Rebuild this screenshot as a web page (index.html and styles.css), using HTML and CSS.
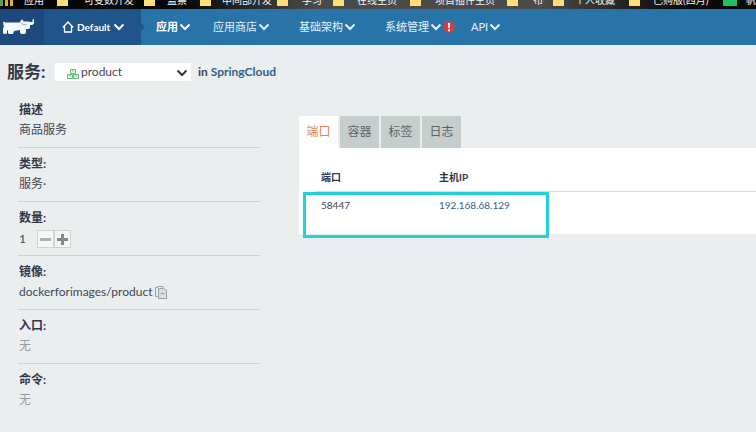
FILE: index.html
```html
<!DOCTYPE html>
<html lang="zh-CN">
<head>
<meta charset="utf-8">
<title>product - SpringCloud</title>
<link rel="stylesheet" href="styles.css">
</head>
<body>
<svg class="defs" aria-hidden="true">
  <symbol id="chevron" viewBox="0 0 12 8"><path d="M1.500 1.500 6 6l4.500-4.500" fill="none" stroke="currentColor" stroke-width="2"/></symbol>
</svg>
<div class="bookmarks">
  <span class="apps"><i></i><i></i><i></i></span>
  <span>应用</span>
  <i class="folder"></i><span>可变数开发</span>
  <i class="folder"></i><span>监察</span>
  <i class="folder"></i><span>中间部开发</span>
  <i class="folder"></i><span>学习</span>
  <i class="folder"></i><span>在线主页</span>
  <i class="folder"></i><span>项目插件主页</span>
  <i class="folder"></i><span>布</span>
  <i class="folder"></i><span>个人收藏</span>
  <i class="folder"></i><span>已购版(四月)</span>
  <i class="folder green"></i><span>帆</span>
</div>
<header class="header">
  <a class="brand" href="#" aria-label="Rancher">
    <svg width="32" height="16" viewBox="0 0 32 16" fill="#f3f9fc"><path d="M0 3.500 1 2.500l1 1h15L18 1l1.500-.5 1 2H25l3 .5h1.500V.500L31 0v4.500L29.500 6H27v3l-1.500 1H23v4l-1 1h-3.500L17 14v-3l-6 1-1 3H6l-1-1v-3l-1 1v2L3 15H1l-1-1V9l1-1z"/><path d="M18.500 4c1 2 3.500 2 5.500 1" fill="none" stroke="#8fb0cc"/></svg>
  </a>
  <a class="env" href="#">
    <svg width="12" height="12" viewBox="0 0 12 12" fill="none" stroke="currentColor" stroke-width="1.300"><path d="M.8 6.500 6 1l5.200 5.500M2.500 5.500V11h7V5.500"/></svg>
    Default<svg class="chev" width="12" height="8"><use href="#chevron"/></svg>
  </a>
  <nav class="nav">
    <a class="on" href="#">应用<svg class="chev" width="12" height="8"><use href="#chevron"/></svg></a>
    <a href="#">应用商店<svg class="chev" width="12" height="8"><use href="#chevron"/></svg></a>
    <a href="#">基础架构<svg class="chev" width="12" height="8"><use href="#chevron"/></svg></a>
    <a href="#">系统管理<svg class="chev" width="12" height="8"><use href="#chevron"/></svg><svg class="alert" width="12" height="12" viewBox="0 0 12 12"><circle cx="6" cy="6" r="5.700" fill="#d93a40"/><path d="M6 2v5M6 8.300v1.900" stroke="#fff" stroke-width="1.900"/></svg></a>
    <a href="#">API<svg class="chev" width="12" height="8"><use href="#chevron"/></svg></a>
  </nav>
</header>
<section class="title">
  <h1><label for="service">服务:</label></h1>
  <div class="picker">
    <select id="service"><option>product</option></select>
    <svg class="stack" width="12" height="10" viewBox="0 0 12 10" fill="#e2f3e4" stroke="#6cba78"><path d="M3.500.5h5v4h-5zM.5 5.500h5v4h-5zM6.500 5.500h5v4h-5zM6 .5v2M3 5.500v2M9 5.500v2"/></svg>
    <svg class="arrow" width="12" height="8"><use href="#chevron"/></svg>
  </div>
  <p>in <a href="#">SpringCloud</a></p>
</section>
<main class="main">
  <aside class="facts">
    <section><h2>描述</h2><p>商品服务</p></section>
    <section><h2>类型:</h2><p>服务·</p></section>
    <section><h2>数量:</h2>
      <div class="scale"><span>1</span><div class="buttons">
        <button type="button" aria-label="减少"><svg width="11" height="11" viewBox="0 0 11 11"><path d="M0 5.500h11" stroke="#adb1b3" stroke-width="3"/></svg></button><button type="button" aria-label="增加"><svg width="11" height="11" viewBox="0 0 11 11"><path d="M0 5.500h11M5.500 0v11" stroke="#85898c" stroke-width="3"/></svg></button>
      </div></div>
    </section>
    <section><h2>镜像:</h2><p class="image">dockerforimages/product
      <svg width="12" height="13" viewBox="0 0 12 13" fill="none" stroke="#999fa2"><path d="M3 10.500H.5v-9H3M2.500.500h5.500v2"/><path d="M3.500 2.500h5l3 2v8h-8z" fill="#dcdfe0"/><path d="M5.500 7.500h4"/></svg></p></section>
    <section><h2>入口:</h2><p class="none">无</p></section>
    <section><h2>命令:</h2><p class="none">无</p></section>
  </aside>
  <div class="detail">
    <div class="tabs" role="tablist">
      <button type="button" role="tab" aria-selected="true">端口</button>
      <button type="button" role="tab" aria-selected="false">容器</button>
      <button type="button" role="tab" aria-selected="false">标签</button>
      <button type="button" role="tab" aria-selected="false">日志</button>
    </div>
    <div class="panel">
      <table>
        <thead><tr><th>端口</th><th>主机IP</th></tr></thead>
        <tbody><tr><td>58447</td><td><a href="#">192.168.68.129</a></td></tr></tbody>
      </table>
      <div class="highlight"></div>
    </div>
  </div>
</main>
</body>
</html>
```
FILE: styles.css
```css
* { box-sizing: border-box; }
body {
  margin: 0;
  min-height: 100vh;
  overflow-x: hidden;
  background: #ebeeef;
  color: #3f4655;
  font: 12px/20px Lato, "Noto Sans CJK SC", sans-serif;
}
h1, h2, p { margin: 0; }
a { color: #325f88; text-decoration: none; }
svg { flex: none; }
.defs { display: none; }

.bookmarks {
  display: grid;
  grid-template-columns: 24px 33px 27px 60px 23px 33px 22px 55px 25px 31px 24px 53px 25px 72px 26px 20px 22px 54px 24px 70px 23px 12px;
  align-content: end;
  align-items: end;
  height: 9px;
  padding-bottom: 3px;
  overflow: hidden;
  background: linear-gradient(90deg, #070707 0 24%, #4a4a4a 42% 72%, #0a0a0a 90%);
  color: #f5f5f5;
  font-size: 10px;
  line-height: 12px;
  white-space: nowrap;
}
.apps { display: flex; gap: 2px; }
.apps i { width: 3px; height: 8px; background: #dfac45; }
.apps i:first-child { background: #4fa45b; }
.folder { width: 11px; height: 8px; background: #fbe078; }
.folder.green { width: 14px; background: #24bd62; }

.header {
  display: flex;
  height: 36px;
  background: #2874a9;
}
.header a { display: flex; align-items: center; color: #e2f2fb; white-space: nowrap; }
.header .brand { width: 44px; padding-left: 3px; background: #1e497d; }
.header .env {
  position: relative;
  gap: 3px;
  width: 97px;
  padding-left: 18px;
  background: #20558b;
  color: #fff;
  font-size: 10px;
  font-weight: 700;
}
.env::after {
  content: "";
  position: absolute;
  left: 100%;
  border: 4px solid transparent;
  border-left-color: #20558b;
}
.nav {
  display: grid;
  grid-template-columns: 57px 86px 86px 86px auto;
  padding-left: 15px;
  font-size: 11px;
}
.nav a { gap: 1px; }
.nav .on { color: #fff; font-weight: 700; }

.title { display: flex; align-items: center; height: 54px; padding-left: 7px; }
h1 { width: 48px; font-size: 17px; line-height: 24px; color: #33394b; white-space: nowrap; }
.picker { position: relative; width: 136px; }
.picker select {
  display: block;
  width: 100%;
  height: 18px;
  padding: 0 24px 0 26px;
  border: 0;
  appearance: none;
  background: #fff;
  color: #3f4655;
  font: inherit;
  line-height: 18px;
}
.stack { position: absolute; left: 12px; top: 6px; }
.arrow { position: absolute; right: 3px; top: 6px; color: #33373c; }
.title p { padding-left: 7px; font-weight: 700; }

.main { display: flex; gap: 39px; }
.facts { flex: none; width: 260px; padding-left: 18px; }
.facts section { height: 54px; padding: 6px 1px 0; border-bottom: 1px solid #cdd2d4; }
.facts section:first-child { height: 49px; padding-top: 1px; }
.facts section:last-child { border: 0; }
h2 { font-size: 12px; line-height: 20px; color: #30374b; }
.facts .image { display: flex; align-items: center; gap: 3px; }
.facts .none { color: #999da1; }
.scale { display: flex; align-items: center; gap: 11px; height: 22px; }
.buttons { display: flex; }
.buttons button {
  display: grid;
  place-items: center;
  width: 17px;
  height: 18px;
  padding: 0;
  border: 1px solid #cfd3d4;
  background: #f5f6f6;
}

.detail { flex: 1; min-width: 0; padding-top: 17px; }
.tabs { display: flex; gap: 2px; }
.tabs button {
  width: 39px;
  height: 32px;
  padding: 0;
  border: 0;
  background: #c6cdcd;
  color: #5c6468;
  font: inherit;
}
.tabs [aria-selected="true"] { background: #fff; color: #e38350; }
.panel { position: relative; padding: 16px 0 15px 16px; background: #fff; }
table { width: 100%; border-collapse: collapse; font-size: 10px; }
th, td { padding: 0 0 0 6px; text-align: left; }
th { height: 27px; border-bottom: 1px solid #dadddd; color: #30374b; }
td { height: 28px; }
th:first-child { width: 118px; }
.highlight {
  position: absolute;
  left: 4px;
  top: 44px;
  width: 246px;
  height: 46px;
  border: 3px solid #24d1d4;
  pointer-events: none;
}
```
